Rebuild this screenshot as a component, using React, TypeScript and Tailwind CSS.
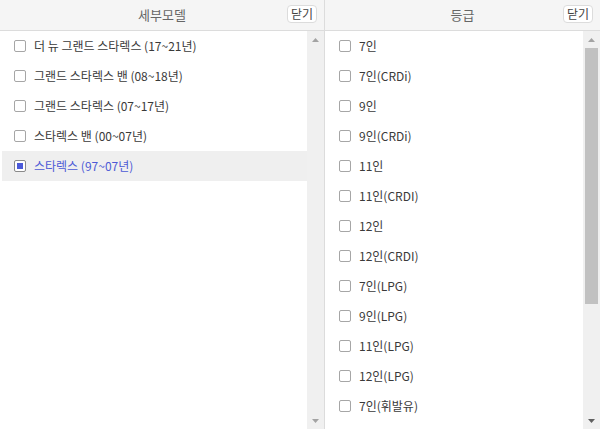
import React from "react";

const FONT = { fontFamily: '"Noto Sans CJK KR", "Noto Sans", sans-serif' };

const models = [
  "더 뉴 그랜드 스타렉스 (17~21년)",
  "그랜드 스타렉스 밴 (08~18년)",
  "그랜드 스타렉스 (07~17년)",
  "스타렉스 밴 (00~07년)",
  "스타렉스 (97~07년)",
];

const grades = [
  "7인",
  "7인(CRDi)",
  "9인",
  "9인(CRDi)",
  "11인",
  "11인(CRDI)",
  "12인",
  "12인(CRDI)",
  "7인(LPG)",
  "9인(LPG)",
  "11인(LPG)",
  "12인(LPG)",
  "7인(휘발유)",
];

function Arrow({ up, dark }: { up?: boolean; dark?: boolean }) {
  return (
    <div className="flex h-[17px] items-center justify-center">
      <svg width="7" height="4" viewBox="0 0 7 4">
        <path d={up ? "M0 4 L3.5 0 L7 4 Z" : "M0 0 L3.5 4 L7 0 Z"} fill={dark ? "#606060" : "#a3a3a3"} />
      </svg>
    </div>
  );
}

function Scrollbar({ thumb }: { thumb?: boolean }) {
  return (
    <div className="flex w-[17px] shrink-0 flex-col bg-[#f0f0f0]">
      <Arrow up />
      <div className="flex-1 px-[2px]">
        {thumb && <div className="h-[256px] bg-[#c1c1c1]" />}
      </div>
      <Arrow dark={thumb} />
    </div>
  );
}

function Row({ label, checked }: { label: string; checked?: boolean }) {
  return (
    <div
      className={
        "flex h-[30px] shrink-0 items-center gap-[8px] pl-[12px] text-[12px] " +
        (checked ? "bg-[#efefef] text-[#4c5ad6]" : "text-[#3a3a3a]")
      }
    >
      <span
        className={
          "flex h-[12px] w-[12px] items-center justify-center rounded-[2px] border bg-white " +
          (checked ? "border-[#8a8a8a]" : "border-[#a6a6a6]")
        }
      >
        {checked && <span className="h-[6px] w-[6px] bg-[#4b59d9]" />}
      </span>
      <span className="whitespace-nowrap">{label}</span>
    </div>
  );
}

function Panel({
  title,
  items,
  selected,
  thumb,
  className,
}: {
  title: string;
  items: string[];
  selected?: number;
  thumb?: boolean;
  className: string;
}) {
  return (
    <div className={"flex h-full flex-col " + className}>
      <div className="relative flex h-[31px] shrink-0 items-center justify-center border-b border-[#dcdcdc] bg-[#f5f5f5]">
        <span className="text-[13px] text-[#666]">{title}</span>
        <button className="absolute right-[7px] top-[5px] h-[18px] rounded-[4px] border border-[#dcdcdc] bg-white px-[3px] text-[12px] leading-[16px] text-[#444]">
          닫기
        </button>
      </div>
      <div className="flex min-h-0 flex-1">
        <div className="flex flex-1 flex-col overflow-hidden pl-[2px]">
          {items.map((it, i) => (
            <Row key={it} label={it} checked={i === selected} />
          ))}
        </div>
        <Scrollbar thumb={thumb} />
      </div>
    </div>
  );
}

export default function App() {
  return (
    <div className="flex h-[429px] w-[600px] overflow-hidden bg-white" style={FONT}>
      <Panel
        title="세부모델"
        items={models}
        selected={4}
        className="w-[325px] border-r border-[#dcdcdc]"
      />
      <Panel title="등급" items={grades} thumb className="w-[275px]" />
    </div>
  );
}
